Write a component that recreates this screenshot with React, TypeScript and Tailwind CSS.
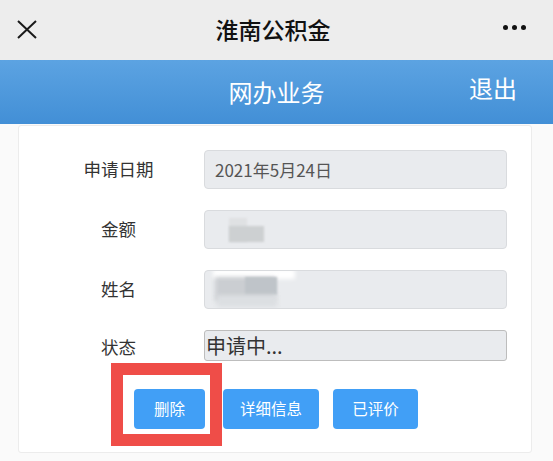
const font = { fontFamily: '"Noto Sans CJK SC", "Noto Sans", sans-serif' };

const Row = ({ label, children }: { label: string; children?: React.ReactNode }) => {
  return (
    <div className="flex items-center h-[39px]">
      <div className="w-[171px] text-center text-[17.5px] text-[#333]">{label}</div>
      <div className="w-[303px] h-[39px] rounded-[4px] border border-[#d9dbde] bg-[#e9ebee] flex items-center relative overflow-hidden">
        {children}
      </div>
    </div>
  );
};

export default function App() {
  return (
    <div className="w-[553px] h-[461px] overflow-hidden bg-[#fafafa]" style={font}>
      {/* wechat top bar */}
      <div className="h-[60px] bg-[#ededed] flex items-center px-[17px] relative">
        <svg width="20" height="19" viewBox="0 0 20 19" className="mt-[-2px]">
          <path d="M1 1 L19 18 M19 1 L1 18" stroke="#1a1a1a" strokeWidth="2" fill="none" />
        </svg>
        <div className="flex-1 text-center text-[23px] font-medium text-[#111] mt-[-2px] pl-[6px]">淮南公积金</div>
        <div className="flex items-center gap-[4px] pr-[10px] mt-[-6px]">
          <span className="w-[5px] h-[5px] rounded-full bg-[#111]" />
          <span className="w-[5px] h-[5px] rounded-full bg-[#111]" />
          <span className="w-[5px] h-[5px] rounded-full bg-[#111]" />
        </div>
      </div>

      {/* blue header */}
      <div className="h-[64px] bg-gradient-to-b from-[#5ca3e2] to-[#428fd6] flex items-center text-white relative">
        <div className="flex-1 text-center text-[24px]">网办业务</div>
        <div className="absolute right-[36px] top-[10px] text-[24px]">退出</div>
      </div>

      {/* card */}
      <div className="ml-[18px] mt-[1px] w-[514px] h-[328px] bg-white border border-[#ececec] rounded-[3px] pl-[14px] pt-[24px] relative">
        <div className="flex flex-col gap-[21px]">
          <Row label="申请日期">
            <span className="pl-[10px] text-[17px] text-[#555]">2021年5月24日</span>
          </Row>
          <Row label="金额">
            <div className="absolute left-[24px] top-[7px] w-[18px] h-[24px] bg-[#dfe1e3] blur-[1px]" />
            <div className="absolute left-[24px] top-[15px] w-[35px] h-[16px] bg-[#cdd0d2] blur-[1px]" />
          </Row>
          <Row label="姓名">
            <div className="absolute left-[8px] top-[-2px] w-[82px] h-[10px] bg-white blur-[2px]" />
            <div className="absolute left-[10px] top-[6px] w-[60px] h-[24px] bg-[#cbced2] blur-[2px]" />
            <div className="absolute left-[40px] top-[6px] w-[32px] h-[18px] bg-[#bfc4c9] blur-[1px]" />
            <div className="absolute left-[12px] top-[24px] w-[60px] h-[12px] bg-[#dcdfe2] blur-[2px]" />
          </Row>
          <div className="flex items-center h-[31px]">
            <div className="w-[171px] text-center text-[17.5px] text-[#333] mt-[4px]">状态</div>
            <div className="w-[303px] h-[31px] rounded-[3px] border border-[#bdbdbd] bg-[#e9ebee] flex items-center">
              <span className="pl-[1px] text-[20px] text-[#333]">申请中...</span>
            </div>
          </div>
        </div>

        <div className="flex items-center mt-[28px] pl-[101px] text-white text-[15.5px]">
          <button className="w-[71px] h-[40px] rounded-[4px] bg-[#419ff6]">删除</button>
          <button className="ml-[18px] w-[96px] h-[40px] rounded-[4px] bg-[#419ff6]">详细信息</button>
          <button className="ml-[14px] w-[85px] h-[40px] rounded-[4px] bg-[#419ff6]">已评价</button>
        </div>

        {/* annotation box */}
        <div className="absolute left-[92px] top-[237px] w-[111px] h-[83px] border-[12px] border-[#ef4d48]" />
      </div>
    </div>
  );
}
